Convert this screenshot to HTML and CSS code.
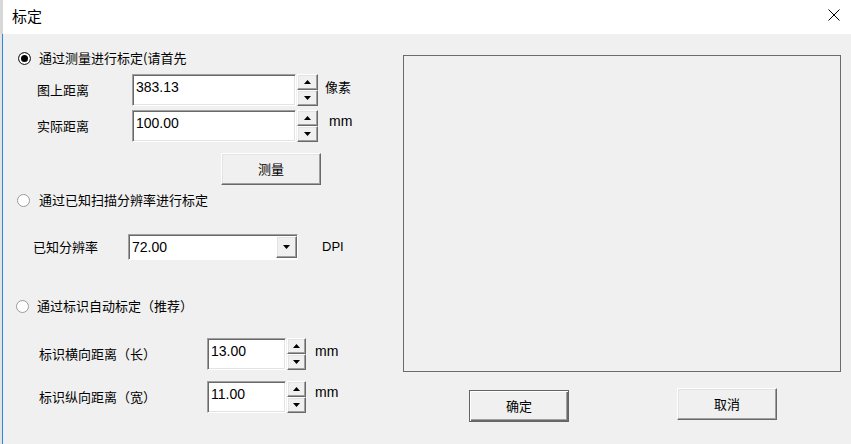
FILE: index.html
```html
<!DOCTYPE html>
<html lang="zh-CN">
<head>
    <meta charset="UTF-8">
    <link rel="stylesheet" href="styles.css">
</head>
<body>
    <div class="titlebar">
        <div class="title">标定</div>
        <svg class="close" width="12" height="12" viewBox="0 0 12 12">
            <path d="M0.5 0.5 L11.5 11.5 M11.5 0.5 L0.5 11.5" stroke="#000" stroke-width="1" fill="none"/>
        </svg>
    </div>

    <div class="client">
        <div class="left">
            <div class="opt opt1">
                <input type="radio" name="modo" checked>
                <span class="optText">通过测量进行标定(请首先</span>
            </div>

            <div class="field f1">
                <span class="rotulo">图上距离</span>
                <div class="edit large">383.13</div>
                <div class="spin">
                    <div class="sb"><i class="up"></i></div>
                    <div class="sb"><i class="down"></i></div>
                </div>
                <span class="unit u1">像素</span>
            </div>

            <div class="field f2">
                <span class="rotulo">实际距离</span>
                <div class="edit large">100.00</div>
                <div class="spin">
                    <div class="sb"><i class="up"></i></div>
                    <div class="sb"><i class="down"></i></div>
                </div>
                <span class="unit latin u2">mm</span>
            </div>

            <div class="btnRow">
                <div class="btn">测量</div>
            </div>

            <div class="opt opt2">
                <input type="radio" name="modo">
                <span class="optText">通过已知扫描分辨率进行标定</span>
            </div>

            <div class="comboRow">
                <span class="rotulo">已知分辨率</span>
                <div class="combo">
                    <span class="comboText">72.00</span>
                    <div class="dropBtn"><i class="down"></i></div>
                </div>
                <span class="unit latin dpi">DPI</span>
            </div>

            <div class="opt opt3">
                <input type="radio" name="modo">
                <span class="optText">通过标识自动标定（推荐）</span>
            </div>

            <div class="field f3">
                <span class="rotulo wide">标识横向距离（长）</span>
                <div class="edit small">13.00</div>
                <div class="spin narrow">
                    <div class="sb"><i class="up"></i></div>
                    <div class="sb"><i class="down"></i></div>
                </div>
                <span class="unit latin u3">mm</span>
            </div>

            <div class="field f4">
                <span class="rotulo wide">标识纵向距离（宽）</span>
                <div class="edit small">11.00</div>
                <div class="spin narrow">
                    <div class="sb"><i class="up"></i></div>
                    <div class="sb"><i class="down"></i></div>
                </div>
                <span class="unit latin u4">mm</span>
            </div>
        </div>

        <div class="right">
            <div class="preview"></div>
            <div class="actions">
                <div class="btn default ok">确定</div>
                <div class="btn cancel">取消</div>
            </div>
        </div>
    </div>
</body>
</html>
```

FILE: styles.css
```css
* {
    box-sizing: border-box;
}

body {
    margin: 0;
    width: 851px;
    height: 444px;
    overflow: hidden;
    background-color: #f0f0f0;
    font-family: "Noto Sans CJK SC", sans-serif;
    font-size: 13px;
    color: #000;
}

.titlebar {
    height: 34px;
    background-color: #fff;
    display: flex;
    justify-content: space-between;
    align-items: flex-start;
    padding: 6px 11px 0 12px;
    box-shadow: inset 3px 0 #d8d8d8;
}

.title {
    font-size: 15px;
    line-height: 20px;
}

.close {
    margin-top: 3px;
}

.client {
    height: 410px;
    display: flex;
    box-shadow: inset 2px 0 #e4e4e4, inset 3px 0 #2d87de;
}

.left {
    width: 403px;
}

/* linhas de opção (radio) */
.opt {
    display: flex;
    align-items: center;
    height: 16px;
    line-height: 16px;
}

.opt input {
    appearance: none;
    -webkit-appearance: none;
    width: 13px;
    height: 13px;
    margin: 0;
    border-radius: 50%;
    border: 1px solid #9a9a9a;
    background-color: #fff;
}

.opt input:checked {
    border-color: #333;
    background-color: #000;
    box-shadow: inset 0 0 0 2px #fff;
}

.optText {
    margin-left: 8px;
    white-space: nowrap;
}

.opt1 {
    margin-top: 16px;
    padding-left: 18px;
}

.opt2 {
    margin-top: 7px;
    padding-left: 17px;
}

.opt2 .optText {
    margin-left: 9px;
}

.opt3 {
    margin-top: 38px;
    padding-left: 16px;
}

/* campos com spin */
.field {
    display: flex;
    align-items: center;
    height: 32px;
}

.f1 {
    margin-top: 8px;
    padding-left: 37px;
}

.f2 {
    margin-top: 4px;
    padding-left: 37px;
}

.f3 {
    margin-top: 24px;
    padding-left: 39px;
}

.f4 {
    margin-top: 11px;
    padding-left: 39px;
}

.rotulo {
    width: 95px;
    line-height: 16px;
    white-space: nowrap;
}

.rotulo.wide {
    width: 168px;
}

.edit {
    height: 32px;
    background-color: #fff;
    border: 1px solid;
    border-color: #a0a0a0 #fff #fff #a0a0a0;
    box-shadow: inset 1px 1px #696969, inset -1px -1px #e3e3e3;
    padding: 4px 0 0 3px;
    font-family: "Liberation Sans", Arial, sans-serif;
    font-size: 14px;
    line-height: 16px;
}

.edit.large {
    width: 164px;
}

.edit.small {
    width: 79px;
}

.spin {
    display: flex;
    flex-direction: column;
    width: 21px;
    height: 32px;
    margin-left: 1px;
}

.spin.narrow {
    width: 19px;
}

.sb,
.dropBtn {
    flex: 1;
    display: flex;
    align-items: center;
    justify-content: center;
    background-color: #f0f0f0;
    border: 1px solid;
    border-color: #fff #696969 #696969 #fff;
    box-shadow: inset -1px -1px #a0a0a0, inset 1px 1px #e3e3e3;
}

.up,
.down {
    display: block;
    width: 7px;
    height: 4px;
    background-color: #000;
}

.up {
    clip-path: polygon(50% 0, 100% 100%, 0 100%);
}

.down {
    clip-path: polygon(0 0, 100% 0, 50% 100%);
}

.unit {
    align-self: flex-start;
    line-height: 16px;
    white-space: nowrap;
}

.latin {
    font-family: "Liberation Sans", Arial, sans-serif;
    font-size: 14px;
}

.u1 {
    margin: 5px 0 0 7px;
}

.u2 {
    margin: 3px 0 0 11px;
}

.u3 {
    margin: 5px 0 0 9px;
}

.u4 {
    margin: 3px 0 0 9px;
}

/* botões */
.btnRow {
    margin-top: 11px;
    padding-left: 221px;
}

.btn {
    width: 100px;
    height: 32px;
    display: flex;
    align-items: center;
    justify-content: center;
    background-color: #f0f0f0;
    border: 1px solid;
    border-color: #fff #696969 #696969 #fff;
    box-shadow: inset -1px -1px #a0a0a0, inset 1px 1px #e3e3e3;
    line-height: 16px;
}

.btn.default {
    border: 1px solid #646464;
    box-shadow: inset 1px 1px #fff, inset -1px -1px #696969, inset -2px -2px #a0a0a0;
}

/* combo */
.comboRow {
    display: flex;
    align-items: center;
    height: 26px;
    margin-top: 26px;
    padding-left: 33px;
}

.combo {
    width: 170px;
    height: 26px;
    display: flex;
    align-items: center;
    justify-content: space-between;
    background-color: #fff;
    border: 1px solid;
    border-color: #a0a0a0 #fff #fff #a0a0a0;
    box-shadow: inset 1px 1px #696969;
    padding-left: 3px;
}

.comboText {
    font-family: "Liberation Sans", Arial, sans-serif;
    font-size: 14px;
    line-height: 16px;
}

.dropBtn {
    flex: none;
    width: 21px;
    height: 22px;
}

.dpi {
    margin-left: 24px;
    font-size: 13px;
    align-self: center;
}

/* lado direito */
.right {
    padding-top: 21px;
}

.preview {
    width: 438px;
    height: 317px;
    border: 1px solid #6b6b6b;
}

.actions {
    display: flex;
    align-items: flex-start;
    margin-top: 16px;
}

.ok {
    margin-top: 2px;
    margin-left: 66px;
}

.cancel {
    margin-left: 108px;
}
```
